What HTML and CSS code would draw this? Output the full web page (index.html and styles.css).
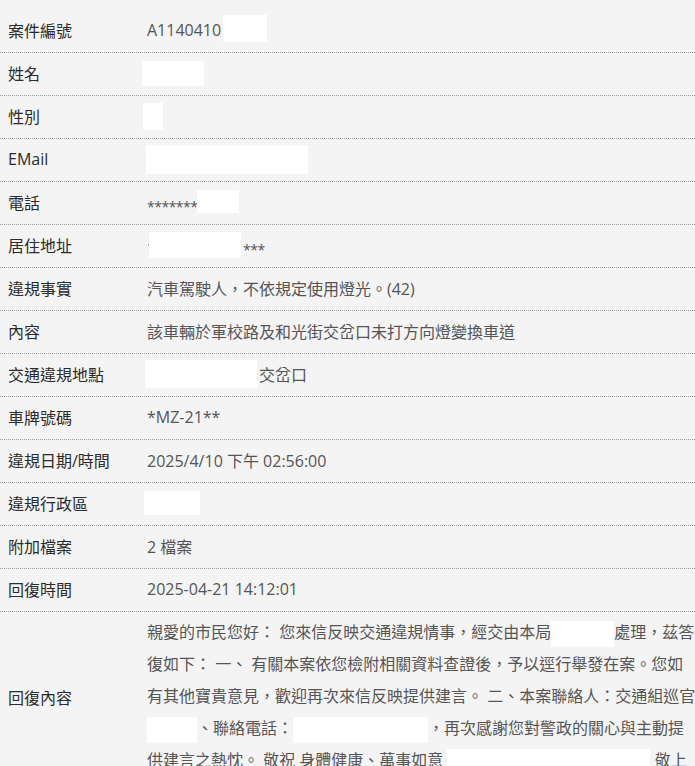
FILE: index.html
```html
<!DOCTYPE html>
<html lang="zh-Hant">
<head>
<meta charset="utf-8">
<title>案件資料</title>
<link rel="stylesheet" href="styles.css">
</head>
<body>
<div class="sheet">
  <div class="row"><div class="label">案件編號</div><div class="value">A1140410<span class="mask m-case"></span></div></div>
  <div class="row"><div class="label">姓名</div><div class="value"><span class="mask m-name"></span></div></div>
  <div class="row"><div class="label">性別</div><div class="value"><span class="mask m-sex"></span></div></div>
  <div class="row"><div class="label">EMail</div><div class="value"><span class="mask m-mail"></span></div></div>
  <div class="row"><div class="label">電話</div><div class="value"><span class="stars">*******</span><span class="mask m-tel"></span></div></div>
  <div class="row"><div class="label">居住地址</div><div class="value"><span class="tick"></span><span class="mask m-addr"></span><span class="stars">***</span></div></div>
  <div class="row"><div class="label">違規事實</div><div class="value">汽車駕駛人，不依規定使用燈光。(42)</div></div>
  <div class="row"><div class="label">內容</div><div class="value">該車輛於軍校路及和光街交岔口未打方向燈變換車道</div></div>
  <div class="row"><div class="label">交通違規地點</div><div class="value"><span class="mask m-place"></span>交岔口</div></div>
  <div class="row"><div class="label">車牌號碼</div><div class="value">*MZ-21**</div></div>
  <div class="row"><div class="label">違規日期/時間</div><div class="value">2025/4/10 下午 02:56:00</div></div>
  <div class="row"><div class="label">違規行政區</div><div class="value"><span class="mask m-dist"></span></div></div>
  <div class="row"><div class="label">附加檔案</div><div class="value">2 檔案</div></div>
  <div class="row"><div class="label">回復時間</div><div class="value">2025-04-21 14:12:01</div></div>
  <div class="row row-tall"><div class="label">回復內容</div><div class="value reply">親愛的市民您好： 您來信反映交通違規情事，經交由本局<span class="mask m-r1"></span>處理，茲答復如下： 一、 有關本案依您檢附相關資料查證後，予以逕行舉發在案。您如有其他寶貴意見，歡迎再次來信反映提供建言。 二、本案聯絡人：交通組巡官<span class="mask m-r2"></span>、聯絡電話：<span class="mask m-r3"></span>，再次感謝您對警政的關心與主動提供建言之熱忱。 敬祝 身體健康、萬事如意 <span class="mask m-r4"></span> 敬上</div></div>
</div>
</body>
</html>
```
FILE: styles.css
```css
html, body {
  margin: 0;
  padding: 0;
  background: #f4f4f4;
  overflow: hidden;
}
body {
  width: 695px;
  font-family: "Open Sans", "Noto Sans CJK TC", sans-serif;
  font-size: 16px;
}
.sheet {
  padding-top: 10px;
}
.row {
  display: grid;
  grid-template-columns: 147px 550px;
  align-items: center;
  height: 40px;
  padding-bottom: 2px;
  border-bottom: 1px dotted #9a9a9a;
}
.label {
  padding-left: 8px;
  color: #2b2b2b;
  white-space: nowrap;
}
.value {
  color: #555;
  white-space: nowrap;
  display: flex;
  align-items: center;
}
.row-tall {
  height: auto;
  padding-bottom: 0;
}
.reply {
  display: block;
  white-space: normal;
  line-height: 32px;
  padding: 4px 0 6px;
}
.mask {
  display: inline-block;
  background: #fff;
  vertical-align: middle;
  height: 26px;
}
.stars {
  font-size: 14px;
  letter-spacing: -0.5px;
  align-self: flex-start;
  margin-top: 8px;
}
.tick {
  display: inline-block;
  width: 1px;
  height: 2px;
  background: #aaa;
  margin-left: 1px;
}
.m-case { width: 44px; height: 27px; margin-left: 2px; margin-top: -4px; }
.m-name { width: 62px; height: 25px; margin-left: -5px; }
.m-sex { width: 20px; height: 27px; margin-left: -4px; }
.m-mail { width: 162px; height: 29px; margin-left: -1px; }
.m-tel { width: 42px; height: 23px; margin-top: -2px; }
.m-addr { width: 92px; height: 26px; margin-right: 2px; }
.m-place { width: 112px; height: 28px; margin-left: -2px; margin-right: 2px; }
.m-dist { width: 56px; height: 24px; margin-left: -3px; }
.m-r1 { width: 63px; height: 26px; }
.m-r2 { width: 50px; height: 26px; }
.m-r3 { width: 135px; height: 26px; }
.m-r4 { width: 203px; height: 26px; }
```
